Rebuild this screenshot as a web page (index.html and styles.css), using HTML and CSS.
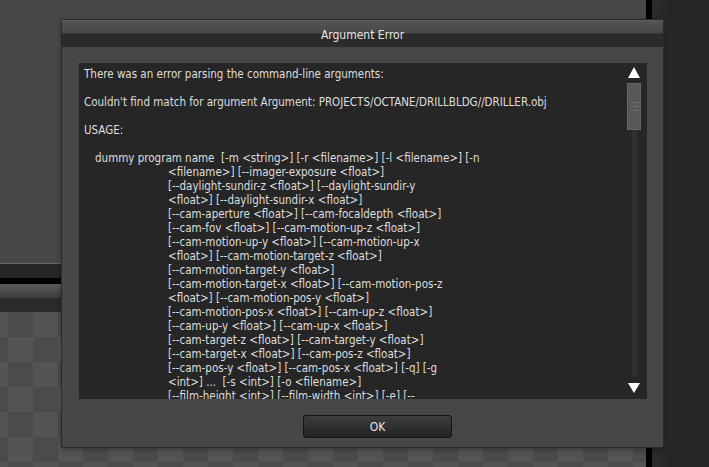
FILE: index.html
```html
<!DOCTYPE html>
<html lang="en">
    <head>
        <meta charset="UTF-8"><meta name="viewport" content="width=device-width, initial-scale=1.0"><title>Argument Error</title>
        <link rel="stylesheet" href="styles.css">
    </head>
    <body>
        <div class="app">
            <div class="workspace">
                <div class="top_panel"></div>
                <div class="band_light"></div>
                <div class="band_dark"></div>
                <div class="band_black"></div>
                <div class="band_bar"></div>
                <div class="band_dark2"></div>
                <div class="canvas"></div>
            </div>
            <div class="divider"></div>
            <div class="side_panel"></div>
        </div>

        <div class="dialog">
            <div class="dialog_title">Argument Error</div>
            <div class="dialog_body">
                <div class="message">
                    <div class="message_text">
                        <p>There was an error parsing the command-line arguments:</p>
                        <p>Couldn't find match for argument Argument: PROJECTS/OCTANE/DRILLBLDG//DRILLER.obj</p>
                        <p>USAGE:</p>
                        <div class="usage">
                            <div class="first">dummy program name &nbsp;[-m &lt;string&gt;] [-r &lt;filename&gt;] [-l &lt;filename&gt;] [-n</div>
                            <div class="cont">&lt;filename&gt;] [--imager-exposure &lt;float&gt;]</div>
                            <div class="cont">[--daylight-sundir-z &lt;float&gt;] [--daylight-sundir-y</div>
                            <div class="cont">&lt;float&gt;] [--daylight-sundir-x &lt;float&gt;]</div>
                            <div class="cont">[--cam-aperture &lt;float&gt;] [--cam-focaldepth &lt;float&gt;]</div>
                            <div class="cont">[--cam-fov &lt;float&gt;] [--cam-motion-up-z &lt;float&gt;]</div>
                            <div class="cont">[--cam-motion-up-y &lt;float&gt;] [--cam-motion-up-x</div>
                            <div class="cont">&lt;float&gt;] [--cam-motion-target-z &lt;float&gt;]</div>
                            <div class="cont">[--cam-motion-target-y &lt;float&gt;]</div>
                            <div class="cont">[--cam-motion-target-x &lt;float&gt;] [--cam-motion-pos-z</div>
                            <div class="cont">&lt;float&gt;] [--cam-motion-pos-y &lt;float&gt;]</div>
                            <div class="cont">[--cam-motion-pos-x &lt;float&gt;] [--cam-up-z &lt;float&gt;]</div>
                            <div class="cont">[--cam-up-y &lt;float&gt;] [--cam-up-x &lt;float&gt;]</div>
                            <div class="cont">[--cam-target-z &lt;float&gt;] [--cam-target-y &lt;float&gt;]</div>
                            <div class="cont">[--cam-target-x &lt;float&gt;] [--cam-pos-z &lt;float&gt;]</div>
                            <div class="cont">[--cam-pos-y &lt;float&gt;] [--cam-pos-x &lt;float&gt;] [-q] [-g</div>
                            <div class="cont">&lt;int&gt;] ... &nbsp;[-s &lt;int&gt;] [-o &lt;filename&gt;]</div>
                            <div class="cont">[--film-height &lt;int&gt;] [--film-width &lt;int&gt;] [-e] [--</div>
                        </div>
                    </div>
                    <div class="scrollbar">
                        <svg class="arrow_up" width="12" height="11" viewBox="0 0 12 11"><polygon points="6,0 12,11 0,11" fill="#ffffff"/></svg>
                        <div class="thumb">
                            <span></span><span></span><span></span>
                        </div>
                        <div class="track"></div>
                        <svg class="arrow_down" width="12" height="10" viewBox="0 0 12 10"><polygon points="0,0 12,0 6,10" fill="#ffffff"/></svg>
                    </div>
                </div>
                <div class="dialog_footer">
                    <button class="ok_button">OK</button>
                </div>
            </div>
        </div>
    </body>
</html>
```

FILE: styles.css
```css
body {
    margin: 0;
    width: 709px;
    height: 467px;
    overflow: hidden;
    background-color: #272727;
    font-family: "DejaVu Sans Condensed", "DejaVu Sans", sans-serif;
    font-stretch: condensed;
    font-size: 12px;
}
.app {
    display: grid;
    grid-template-columns: 646px 6px 1fr;
    height: 467px;
}
.workspace {
    display: flex;
    flex-direction: column;
}
.top_panel {
    height: 263px;
    background-color: #484848;
}
.band_light {
    height: 1px;
    background-color: #666666;
}
.band_dark {
    height: 14px;
    background-color: #262626;
}
.band_black {
    height: 6px;
    background-color: #000000;
}
.band_bar {
    height: 14px;
    background: linear-gradient(#5a5a5a, #3c3c3c);
}
.band_dark2 {
    height: 14px;
    background-color: #2a2a2a;
}
.canvas {
    flex: 1;
    background-color: #4b4b4b;
    background-image: conic-gradient(#545454 0 25%, transparent 0 50%, #545454 0 75%, transparent 0);
    background-size: 50px 50px;
    background-position: 8px 0;
}
.divider {
    background-color: #000000;
}
.side_panel {
    background: linear-gradient(90deg, #2c2c2c, #262626 20px);
}

/* dialog window */
.dialog {
    position: absolute;
    left: 62px;
    top: 20px;
    width: 601px;
    height: 427px;
    display: flex;
    flex-direction: column;
    background-color: #474747;
    box-shadow: 0 0 0 1px #2a2a2a, 0 2px 6px rgba(0, 0, 0, 0.4);
}
.dialog_title {
    height: 27px;
    line-height: 28px;
    text-align: center;
    color: #e8e8e8;
    background: linear-gradient(#545454 0, #474747 12px, #2b2b2b 13px, #2b2b2b 100%);
    border-top: 1px solid #5e5e5e;
    box-sizing: border-box;
}
.dialog_body {
    flex: 1;
    display: flex;
    flex-direction: column;
    padding: 16px 16px 0 17px;
}
.message {
    height: 336px;
    display: flex;
    background-color: #262626;
}
.message_text {
    flex: 1;
    overflow: hidden;
    padding: 4px 0 0 5px;
    color: #dedede;
    font-size: 11.5px;
    line-height: 14px;
    white-space: nowrap;
}
.message_text p {
    margin: 0 0 14px 0;
}
.usage .first {
    padding-left: 11px;
}
.usage .cont {
    padding-left: 84px;
}
.scrollbar {
    width: 14px;
    margin-right: 6px;
    display: flex;
    flex-direction: column;
    align-items: center;
    padding: 4px 0 6px 0;
}
.arrow_up {
    display: block;
    margin-bottom: 5px;
}
.arrow_down {
    display: block;
    margin-top: 6px;
}
.thumb {
    width: 14px;
    height: 47px;
    box-sizing: border-box;
    background-color: #575757;
    border: 1px solid #666666;
    display: flex;
    flex-direction: column;
    justify-content: center;
    align-items: center;
    gap: 3px;
}
.thumb span {
    display: block;
    width: 9px;
    height: 1px;
    background-color: #6e6e6e;
}
.track {
    flex: 1;
    width: 5px;
    background-color: #2f2f2f;
}
.dialog_footer {
    display: flex;
    padding: 16px 0 0 224px;
}
.ok_button {
    width: 149px;
    height: 23px;
    padding: 0;
    border: 1px solid #151515;
    border-radius: 3px;
    background: linear-gradient(#3d3d3d, #232323);
    color: #e6e6e6;
    font-family: "DejaVu Sans Condensed", "DejaVu Sans", sans-serif;
    font-stretch: condensed;
    font-size: 12px;
}
```
